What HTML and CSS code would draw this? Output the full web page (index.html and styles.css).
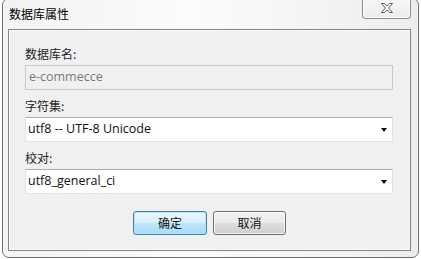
FILE: index.html
```html
<!DOCTYPE html>
<html lang="zh">
<head>
<meta charset="utf-8">
<title>数据库属性</title>
<link rel="stylesheet" href="styles.css">
</head>
<body>
<div class="frame">
  <div class="titlebar">
    <span class="title">数据库属性</span>
    <div class="close">
      <svg width="14" height="10" viewBox="0 0 14 10">
        <path d="M1.5 0.5 H4.5 L7 3.2 L9.5 0.5 H12.5 L8.6 5 L12.5 9.5 H9.5 L7 6.8 L4.5 9.5 H1.5 L5.4 5 Z" fill="#ffffff" stroke="#5c5c5c" stroke-width="1" stroke-linejoin="round"/>
      </svg>
    </div>
  </div>
  <div class="client">
    <div class="field">
      <div class="label">数据库名:</div>
      <div class="box disabled">e-commecce</div>
    </div>
    <div class="field">
      <div class="label">字符集:</div>
      <div class="box select"><span class="value">utf8 -- UTF-8 Unicode</span><span class="arrow"></span></div>
    </div>
    <div class="field">
      <div class="label">校对:</div>
      <div class="box select"><span class="value">utf8_general_ci</span><span class="arrow"></span></div>
    </div>
    <div class="buttons">
      <div class="btn primary">确定</div>
      <div class="btn">取消</div>
    </div>
  </div>
</div>
</body>
</html>
```

FILE: styles.css
```css
* { box-sizing: border-box; }
html, body {
  margin: 0;
  padding: 0;
  width: 421px;
  height: 259px;
  overflow: hidden;
  background: #ffffff;
  font-family: "Open Sans", "Noto Sans CJK SC", sans-serif;
  font-size: 12px;
  color: #1e1e1e;
}
.frame {
  margin: -2px 0 0 2px;
  width: 417px;
  height: 260px;
  border: 1px solid #707070;
  border-radius: 7px;
  background: linear-gradient(to right, #f3f3f3 0%, #fbfbfb 45%, #f7f7f7 65%, #ededed 100%);
  display: flex;
  flex-direction: column;
}
.titlebar {
  height: 30px;
  display: flex;
  align-items: flex-start;
  justify-content: space-between;
  padding: 0 7px 0 6px;
}
.title {
  font-family: "Noto Sans CJK SC", sans-serif;
  font-size: 12px;
  line-height: 16px;
  margin-top: 7px;
  color: #000;
}
.close {
  width: 49px;
  height: 21px;
  margin-top: -1px;
  border: 1px solid #8d8d8d;
  border-top: none;
  border-radius: 0 0 4px 4px;
  background: linear-gradient(#f7f7f7, #ececec);
  box-shadow: inset 0 0 0 1px rgba(255,255,255,0.8);
  display: flex;
  align-items: center;
  justify-content: center;
  padding-bottom: 1px;
}
.close svg { display: block; }
.client {
  margin: 0 7px 0 5px;
  height: 222px;
  border: 1px solid #858585;
  background: #f0f0f0;
  box-shadow: inset 0 0 0 1px #fafafa;
  padding: 16px 17px 0 16px;
}
.field { margin-bottom: 8px; }
.label {
  font-family: "Noto Sans CJK SC", sans-serif;
  line-height: 16px;
  height: 16px;
  margin-bottom: 3px;
  color: #1e1e1e;
}
.box {
  height: 25px;
  width: 368px;
  display: flex;
  align-items: center;
  padding: 0 4px 1px 2px;
  line-height: 16px;
  font-size: 12.5px;
}
.box.disabled {
  border: 1px solid #c9c9c9;
  background: #f0f0f0;
  color: #7a7a7a;
  padding-left: 3px;
}
.box.select {
  background: #ffffff;
  border: 1px solid #e2e3ea;
  border-top-color: #abadb3;
  color: #111;
  justify-content: space-between;
}
.arrow {
  width: 0;
  height: 0;
  border-left: 3.5px solid transparent;
  border-right: 3.5px solid transparent;
  border-top: 4px solid #000;
  margin-top: 2px;
  margin-right: 1px;
}
.buttons {
  display: flex;
  justify-content: center;
  gap: 6px;
  margin-top: 17px;
  padding-left: 1px;
}
.btn {
  width: 73px;
  height: 24px;
  border: 1px solid #707070;
  border-radius: 3px;
  background: linear-gradient(#f2f2f2 0%, #ebebeb 48%, #dddddd 52%, #cfcfcf 100%);
  box-shadow: inset 0 0 0 1px rgba(255,255,255,0.7);
  font-family: "Noto Sans CJK SC", sans-serif;
  line-height: 16px;
  display: flex;
  align-items: center;
  justify-content: center;
  color: #111;
}
.btn.primary {
  width: 74px;
  border-color: #3c7fb1;
  background: linear-gradient(#eaf6fd 0%, #d9f0fc 48%, #bee6fd 52%, #a7d9f5 100%);
  box-shadow: inset 0 0 0 1px #b8e3fb;
}
```
